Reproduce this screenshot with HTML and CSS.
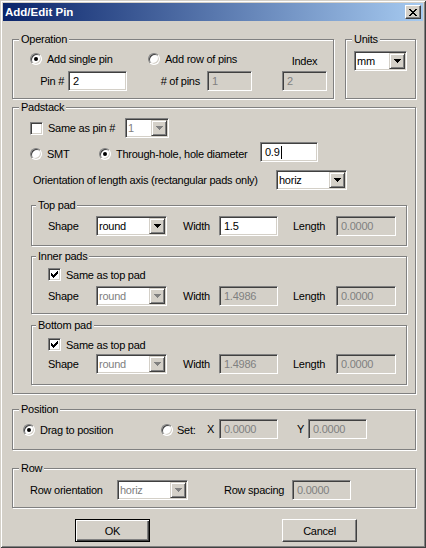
FILE: index.html
```html
<!DOCTYPE html>
<html>
<head>
<meta charset="utf-8">
<title>Add/Edit Pin</title>
<link rel="stylesheet" href="styles.css">
</head>
<body>
<div class="window">
  <div class="titlebar">
    <span class="title">Add/Edit Pin</span>
    <span class="close"><svg width="8" height="7" viewBox="0 0 8 7" shape-rendering="crispEdges"><path fill="#000" d="M0 0h2v1h-2zM6 0h2v1h-2zM1 1h2v1h-2zM5 1h2v1h-2zM2 2h4v1h-4zM3 3h2v1h-2zM2 4h4v1h-4zM1 5h2v1h-2zM5 5h2v1h-2zM0 6h2v1h-2zM6 6h2v1h-2z"/></svg></span>
  </div>
  <div class="client">
    <div class="toprow">
      <div class="group g-operation">
        <span class="legend">Operation</span>
        <div class="row op-a">
          <span class="radio r-single"><span class="rb checked"></span>Add single pin</span>
          <span class="radio r-row"><span class="rb"></span>Add row of pins</span>
          <span class="index-lbl">Index</span>
        </div>
        <div class="row op-b">
          <span class="lbl l-pin">Pin #</span>
          <span class="field f-pin">2</span>
          <span class="lbl l-npins"># of pins</span>
          <span class="field disabled f-npins">1</span>
          <span class="field disabled f-index">2</span>
        </div>
      </div>
      <div class="group g-units">
        <span class="legend">Units</span>
        <div class="combo c-units"><span class="ctext">mm</span><span class="cbtn"><svg class="arr" width="7" height="4" viewBox="0 0 7 4" shape-rendering="crispEdges"><path d="M0 0h7v1h-1v1h-1v1h-1v1h-1v-1h-1v-1h-1v-1h-1z"/></svg></span></div>
      </div>
    </div>

    <div class="group g-padstack">
      <span class="legend">Padstack</span>
      <div class="row ps-1">
        <span class="check cb-same"><span class="cb"></span>Same as pin #</span>
        <div class="combo disabled c-same"><span class="ctext">1</span><span class="cbtn"><svg class="arr" width="7" height="4" viewBox="0 0 7 4" shape-rendering="crispEdges"><path d="M0 0h7v1h-1v1h-1v1h-1v1h-1v-1h-1v-1h-1v-1h-1z"/></svg></span></div>
      </div>
      <div class="row ps-2">
        <span class="radio r-smt"><span class="rb"></span>SMT</span>
        <span class="radio r-th"><span class="rb checked"></span>Through-hole, hole diameter</span>
        <span class="field f-hole">0.9<span class="caret"></span></span>
      </div>
      <div class="row ps-3">
        <span class="lbl l-orient">Orientation of length axis (rectangular pads only)</span>
        <div class="combo c-wide"><span class="ctext">horiz</span><span class="cbtn"><svg class="arr" width="7" height="4" viewBox="0 0 7 4" shape-rendering="crispEdges"><path d="M0 0h7v1h-1v1h-1v1h-1v1h-1v-1h-1v-1h-1v-1h-1z"/></svg></span></div>
      </div>

      <div class="group sub g-top">
        <span class="legend">Top pad</span>
        <div class="row pad-row r-top">
          <span class="lbl l-shape">Shape</span>
          <div class="combo c-wide"><span class="ctext">round</span><span class="cbtn"><svg class="arr" width="7" height="4" viewBox="0 0 7 4" shape-rendering="crispEdges"><path d="M0 0h7v1h-1v1h-1v1h-1v1h-1v-1h-1v-1h-1v-1h-1z"/></svg></span></div>
          <span class="lbl l-width">Width</span>
          <span class="field f-w">1.5</span>
          <span class="lbl l-length">Length</span>
          <span class="field disabled f-l">0.0000</span>
        </div>
      </div>

      <div class="group sub g-inner">
        <span class="legend">Inner pads</span>
        <div class="row pad-check c-inner">
          <span class="check"><span class="cb"><svg width="7" height="7" viewBox="0 0 7 7" shape-rendering="crispEdges"><path fill="#000" d="M0 2h1v3h-1zM1 3h1v3h-1zM2 4h1v3h-1zM3 3h1v3h-1zM4 2h1v3h-1zM5 1h1v3h-1zM6 0h1v3h-1z"/></svg></span>Same as top pad</span>
        </div>
        <div class="row pad-row r-inner">
          <span class="lbl l-shape">Shape</span>
          <div class="combo disabled c-wide"><span class="ctext">round</span><span class="cbtn"><svg class="arr" width="7" height="4" viewBox="0 0 7 4" shape-rendering="crispEdges"><path d="M0 0h7v1h-1v1h-1v1h-1v1h-1v-1h-1v-1h-1v-1h-1z"/></svg></span></div>
          <span class="lbl l-width">Width</span>
          <span class="field disabled f-w">1.4986</span>
          <span class="lbl l-length">Length</span>
          <span class="field disabled f-l">0.0000</span>
        </div>
      </div>

      <div class="group sub g-bottom">
        <span class="legend">Bottom pad</span>
        <div class="row pad-check c-bottom">
          <span class="check"><span class="cb"><svg width="7" height="7" viewBox="0 0 7 7" shape-rendering="crispEdges"><path fill="#000" d="M0 2h1v3h-1zM1 3h1v3h-1zM2 4h1v3h-1zM3 3h1v3h-1zM4 2h1v3h-1zM5 1h1v3h-1zM6 0h1v3h-1z"/></svg></span>Same as top pad</span>
        </div>
        <div class="row pad-row r-bottom">
          <span class="lbl l-shape">Shape</span>
          <div class="combo disabled c-wide"><span class="ctext">round</span><span class="cbtn"><svg class="arr" width="7" height="4" viewBox="0 0 7 4" shape-rendering="crispEdges"><path d="M0 0h7v1h-1v1h-1v1h-1v1h-1v-1h-1v-1h-1v-1h-1z"/></svg></span></div>
          <span class="lbl l-width">Width</span>
          <span class="field disabled f-w">1.4986</span>
          <span class="lbl l-length">Length</span>
          <span class="field disabled f-l">0.0000</span>
        </div>
      </div>
    </div>

    <div class="group g-position">
      <span class="legend">Position</span>
      <div class="row pos-row">
        <span class="radio r-drag"><span class="rb checked"></span>Drag to position</span>
        <span class="radio r-set"><span class="rb"></span>Set:</span>
        <span class="lbl l-x">X</span>
        <span class="field disabled f-xy">0.0000</span>
        <span class="lbl l-y">Y</span>
        <span class="field disabled f-xy">0.0000</span>
      </div>
    </div>

    <div class="group g-row">
      <span class="legend">Row</span>
      <div class="row rowg-row">
        <span class="lbl l-rowor">Row orientation</span>
        <div class="combo disabled c-wide"><span class="ctext">horiz</span><span class="cbtn"><svg class="arr" width="7" height="4" viewBox="0 0 7 4" shape-rendering="crispEdges"><path d="M0 0h7v1h-1v1h-1v1h-1v1h-1v-1h-1v-1h-1v-1h-1z"/></svg></span></div>
        <span class="lbl l-spacing">Row spacing</span>
        <span class="field disabled f-spacing">0.0000</span>
      </div>
    </div>

    <div class="buttons">
      <span class="btn default b-ok">OK</span>
      <span class="btn b-cancel">Cancel</span>
    </div>
  </div>
</div>
</body>
</html>
```

FILE: styles.css
```css
* { box-sizing: border-box; }
html, body { margin: 0; padding: 0; }
body {
  background: #d4d0c8;
  font-family: "Liberation Sans", Arial, sans-serif;
  font-size: 11px;
  letter-spacing: -0.25px;
  color: #000;
  width: 426px;
  height: 548px;
  overflow: hidden;
}
.window {
  width: 426px;
  height: 548px;
  padding: 3px;
  background: #d4d0c8;
  box-shadow: inset 1px 1px 0 #d4d0c8, inset -1px -1px 0 #404040, inset 2px 2px 0 #fff, inset -2px -2px 0 #808080;
  display: flex;
  flex-direction: column;
}
.titlebar {
  height: 18px;
  flex: none;
  background: linear-gradient(to right, #0a246a, #a6caf0);
  display: flex;
  align-items: center;
  justify-content: space-between;
  padding: 0 2px;
}
.title { color: #fff; font-weight: bold; font-size: 11.5px; letter-spacing: 0; }
.close {
  width: 16px;
  height: 14px;
  background: #d4d0c8;
  border: 1px solid;
  border-color: #fff #404040 #404040 #fff;
  box-shadow: inset -1px -1px 0 #808080;
  display: flex;
  align-items: center;
  justify-content: center;
}
.close svg { display: block; }

.client { padding: 18px 0 0 9px; }
.toprow { display: flex; gap: 11px; }

.group {
  position: relative;
  border: 1px solid #808080;
  box-shadow: inset 1px 1px 0 #fff, 1px 1px 0 #fff;
  flex: none;
}
.legend {
  position: absolute;
  top: -7px;
  left: 6px;
  line-height: 13px;
  padding: 0 2px;
  background: #d4d0c8;
}
.sub .legend { left: 4px; }

.row { display: flex; align-items: center; height: 20px; }
.lbl { display: flex; align-items: center; white-space: nowrap; }

/* radio / check */
.radio, .check { display: flex; align-items: center; white-space: nowrap; }
.rb {
  width: 12px; height: 12px;
  border-radius: 50%;
  border: 1px solid;
  border-color: #808080 #fff #fff #808080;
  background: #fff;
  box-shadow: inset 1px 1px 0 #404040, inset -1px -1px 0 #d4d0c8;
  margin-right: 5px;
  display: flex; align-items: center; justify-content: center;
  flex: none;
}
.rb.checked::after {
  content: "";
  width: 4px; height: 4px;
  border-radius: 50%;
  background: #000;
}
.cb {
  width: 13px; height: 13px;
  border: 1px solid;
  border-color: #808080 #fff #fff #808080;
  background: #fff;
  box-shadow: inset 1px 1px 0 #404040, inset -1px -1px 0 #d4d0c8;
  margin-right: 5px;
  display: flex; align-items: center; justify-content: center;
  flex: none;
}
.cb svg { display: block; }

/* fields */
.field {
  height: 20px;
  border: 1px solid;
  border-color: #808080 #fff #fff #808080;
  box-shadow: inset 1px 1px 0 #404040, inset -1px -1px 0 #d4d0c8;
  background: #fff;
  padding-left: 4px;
  display: flex; align-items: center;
  flex: none;
}
.disabled { background: #d4d0c8; color: #808080; }
.caret { width: 1px; height: 13px; background: #000; margin-left: 1px; }

.combo {
  display: flex;
  height: 20px;
  border: 1px solid;
  border-color: #808080 #fff #fff #808080;
  box-shadow: inset 1px 1px 0 #404040, inset -1px -1px 0 #d4d0c8;
  background: #fff;
  padding: 1px;
  flex: none;
}
.ctext { flex: 1; display: flex; align-items: center; padding-left: 1px; }
.cbtn {
  width: 16px; height: 16px;
  background: #d4d0c8;
  border: 1px solid;
  border-color: #d4d0c8 #404040 #404040 #d4d0c8;
  box-shadow: inset 1px 1px 0 #fff, inset -1px -1px 0 #808080;
  display: flex; align-items: center; justify-content: center;
}
.arr { display: block; fill: #000; }
.combo.disabled .arr { fill: #808080; }

/* Operation */
.g-operation { width: 322px; height: 60px; }
.op-a { margin: 10px 0 0 17px; height: 18px; align-items: stretch; }
.op-a .radio { align-items: center; }
.r-single { width: 118px; }
.r-row { width: 134px; }
.index-lbl { width: 45px; text-align: center; align-self: flex-end; line-height: 13px; }
.op-b { margin-top: 3px; }
.l-pin { width: 55px; justify-content: flex-end; padding-right: 4px; }
.f-pin { width: 59px; }
.l-npins { width: 80px; justify-content: flex-end; padding-right: 7px; }
.f-npins { width: 45px; }
.f-index { width: 45px; margin-left: 30px; }

/* Units */
.g-units { width: 71px; height: 60px; }
.c-units { width: 53px; margin: 11px 0 0 8px; }

/* Padstack */
.g-padstack { width: 404px; height: 287px; margin-top: 8px; }
.ps-1 { margin: 10px 0 0 17px; }
.cb-same { width: 95px; }
.c-same { width: 44px; }
.ps-2 { margin: 4px 0 0 17px; }
.ps-2 .radio { padding-top: 4px; }
.r-smt { width: 69px; }
.r-th { width: 161px; }
.f-hole { width: 58px; }
.ps-3 { margin: 8px 0 0 20px; }
.l-orient { width: 243px; }
.c-wide { width: 71px; }

.sub { width: 376px; margin-left: 18px; }
.g-top { height: 41px; margin-top: 15px; }
.g-inner { height: 58px; margin-top: 10px; }
.g-bottom { height: 60px; margin-top: 11px; }
.pad-row { margin-left: 16px; }
.r-top { margin-top: 10px; }
.pad-check { margin-left: 16px; height: 13px; }
.c-inner { margin-top: 11px; }
.r-inner { margin-top: 5px; }
.c-bottom { margin-top: 12px; }
.r-bottom { margin-top: 3px; }
.l-shape { width: 48px; }
.l-width { width: 52px; padding-left: 16px; }
.f-w { width: 59px; }
.l-length { width: 58px; padding-left: 15px; }
.f-l { width: 60px; }

/* Position */
.g-position { width: 404px; height: 41px; margin-top: 15px; }
.pos-row { margin: 9px 0 0 10px; }
.pos-row .radio { padding-top: 2px; }
.r-drag { width: 138px; }
.r-set { width: 46px; }
.r-set .rb { margin-right: 4px; }
.l-x { width: 12px; }
.f-xy { width: 59px; }
.l-y { width: 30px; justify-content: flex-end; padding-right: 4px; }

/* Row */
.g-row { width: 404px; height: 40px; margin-top: 18px; }
.rowg-row { margin: 11px 0 0 17px; }
.l-rowor { width: 87px; }
.l-spacing { width: 104px; padding-left: 36px; }
.f-spacing { width: 59px; }

/* Buttons */
.buttons { display: flex; margin-top: 11px; }
.btn {
  width: 75px; height: 23px;
  display: flex; align-items: center; justify-content: center;
  background: #d4d0c8;
  border: 1px solid;
  border-color: #fff #404040 #404040 #fff;
  box-shadow: inset -1px -1px 0 #808080, inset 1px 1px 0 #d4d0c8;
}
.btn.default {
  border-color: #000;
  box-shadow: inset 1px 1px 0 #fff, inset -1px -1px 0 #404040, inset -2px -2px 0 #808080;
}
.b-ok { margin-left: 63px; }
.b-cancel { margin-left: 132px; }
```
